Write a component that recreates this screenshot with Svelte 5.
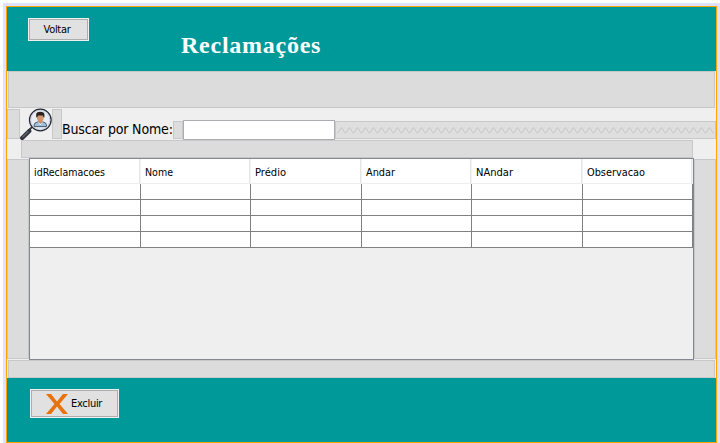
<script>
  const columns = [
    { label: 'idReclamacoes', w: 111, tw: 71 },
    { label: 'Nome', w: 110, tw: 28 },
    { label: 'Prédio', w: 111, tw: 31 },
    { label: 'Andar', w: 110, tw: 29 },
    { label: 'NAndar', w: 111, tw: 37 },
    { label: 'Observacao', w: 110, tw: 58 }
  ];
  const rows = [0, 1, 2, 3];
  let search = $state('');
  const zigzag = 'M1.5 3.5' + Array.from({ length: 47 }, () => 'l4 -6l4 6').join('');
</script>

<div class="page">
  <div class="desk">
    <main class="frame">
      <header class="band">
        <button class="back"><span>Voltar</span></button>
        <h1>Reclamações</h1>
      </header>

      <div class="strip top"></div>

      <div class="search">
        <div class="strip s1"></div>
        <svg class="finder" width="32" height="32" viewBox="0 0 32 32">
          <path d="M2.2 30 9.3 22.9" stroke="#30343c" stroke-width="4.2" stroke-linecap="round" />
          <path d="M2.4 29.4 8.5 23.2" stroke="#596069" stroke-width="1.5" />
          <path d="M8.5 22.5 12.5 18.7" stroke="#30343c" stroke-width="1.8" />
          <circle cx="20.3" cy="12" r="10.8" fill="#e8edf3" stroke="#252932" stroke-width="1.3" />
          <circle cx="20.3" cy="12" r="9.5" fill="none" stroke="#c5ccda" stroke-width=".8" />
          <path d="M14.2 18.6v-1.8q0-2 3.2-2.8h5.8q3.2.8 3.2 2.8v1.8z" fill="#9cc3e6" stroke="#303948" stroke-width=".8" />
          <path d="m17.8 14 2.5 3 2.5-3z" fill="#fff" />
          <path d="M18.6 11.5h3.4v3l-1.7 1.4-1.7-1.4z" fill="#c08560" />
          <path d="M17 6.5h6.6v4.2q-.6 3-3.3 3.2-2.7-.2-3.3-3.2z" fill="#d2966e" />
          <path d="M16.2 9.5V6q.5-2.3 4.1-2.3 4.1 0 4.1 2.8v3l-1-.3-.5-1.7-4.8-.1-.9 1.8z" fill="#2d211d" />
        </svg>
        <div class="strip s2"></div>
        <label for="nome">Buscar por Nome:</label>
        <div class="strip s3"></div>
        <input id="nome" bind:value={search} />
        <div class="strip spring">
          <svg width="379" height="16" viewBox="0 -8 379 16"><path d={zigzag} fill="none" stroke="#c6c6c6" /></svg>
        </div>
      </div>

      <div class="strip above"></div>

      <section class="middle">
        <div class="strip side"></div>
        <div class="grid">
          <div class="head">
            {#each columns as c}
              <div class="th" style:width="{c.w}px">
                <svg width={c.tw + 2} height="16"><text x="0" y="12" textLength={c.tw} lengthAdjust="spacingAndGlyphs">{c.label}</text></svg>
              </div>
            {/each}
          </div>
          {#each rows as r (r)}
            <div class="tr">
              {#each columns as c}<div class="td" style:width="{c.w}px"></div>{/each}
            </div>
          {/each}
        </div>
        <div class="strip side"></div>
      </section>

      <div class="strip bottom"></div>

      <footer class="band">
        <button class="delete">
          <svg width="22" height="20" viewBox="0 0 22 20">
            <path d="M0 0h5l6 7.5L17 0h5l-8.5 10L22 20h-5l-6-7.5L5 20H0l8.5-10z" fill="#e8720c" />
          </svg>
          <span>Excluir</span>
        </button>
      </footer>
    </main>
  </div>
</div>

<style>
  :global(body) { background: #fff; }
  .page { width: 720px; height: 443px; padding: 3px 0 0 3px; box-sizing: border-box; overflow: hidden; font-family: "DejaVu Sans Condensed", "DejaVu Sans", sans-serif; font-stretch: condensed; color: #000; }
  .desk { height: 440px; padding: 3px 3px 0; box-sizing: border-box; background: #e0e0ff; }
  .frame { display: flex; flex-direction: column; width: 711px; height: 437px; box-sizing: border-box; border: 1px solid #ffa500; background: #efefef; }
  .band { display: flex; align-items: flex-start; height: 64px; background: #009999; flex: none; box-sizing: border-box; }
  .strip { box-sizing: border-box; border: 1px solid #c8c8c8; background: #dcdcdc; flex: none; }
  .top { height: 37px; margin: 0 1px; }
  button { display: flex; align-items: center; justify-content: center; box-sizing: border-box; padding: 0; border: 1px solid #adadad; outline: 1px solid #f0f0f0; border-radius: 0; background: #e1e1e1; font: 11px "DejaVu Sans Condensed", sans-serif; font-stretch: condensed; letter-spacing: -0.3px; color: #000; white-space: nowrap; }
  .back { width: 59px; height: 21px; margin: 12px 0 0 22px; padding-right: 3px; }
  h1 { margin: 24px 0 0 93px; font: bold 24px/28px "Liberation Serif", serif; color: #fff; letter-spacing: 0.75px; }
  .search { display: flex; align-items: flex-end; height: 32px; flex: none; }
  .s1 { width: 13px; height: 30px; margin-bottom: 1px; }
  .finder { flex: none; width: 32px; height: 32px; }
  .s2 { width: 10px; height: 30px; margin-bottom: 1px; }
  label { width: 111px; height: 22px; font-size: 14px; line-height: 22px; letter-spacing: -0.16px; white-space: nowrap; }
  .s3 { width: 10px; height: 18px; margin-bottom: 1px; }
  input { width: 152px; height: 20px; box-sizing: border-box; margin: 0; padding: 0 4px; border: 1px solid #abadb3; background: #fff; font: 11px "DejaVu Sans Condensed", sans-serif; outline: 0; border-radius: 0; }
  .spring { width: 381px; height: 18px; margin-bottom: 1px; background: #dfdfdf; overflow: hidden; }
  .spring svg { display: block; }
  .above { width: 672px; height: 18px; margin-left: 14px; }
  .middle { display: flex; height: 202px; flex: none; }
  .side { width: 22px; height: 200px; margin-top: 1px; }
  .grid { width: 665px; height: 202px; box-sizing: border-box; border: 1px solid #828790; flex: none; }
  .head { display: flex; height: 25px; box-sizing: border-box; border-bottom: 1px solid #efefef; background: #fff; }
  .th { display: flex; align-items: center; box-sizing: border-box; padding: 2px 0 0 4px; border-right: 1px solid #f3f3f3; box-shadow: inset -1px 0 #e5e5e5; flex: none; }
  .th svg { display: block; font-size: 11px; }
  .tr { display: flex; height: 16px; }
  .td { box-sizing: border-box; background: #fff; border: solid #808080; border-width: 0 1px 1px 0; flex: none; }
  .bottom { height: 18px; margin: 0 1px; }
  .delete { width: 87px; height: 27px; margin: 12px 0 0 24px; justify-content: flex-start; padding-left: 14px; gap: 3px; }
</style>
